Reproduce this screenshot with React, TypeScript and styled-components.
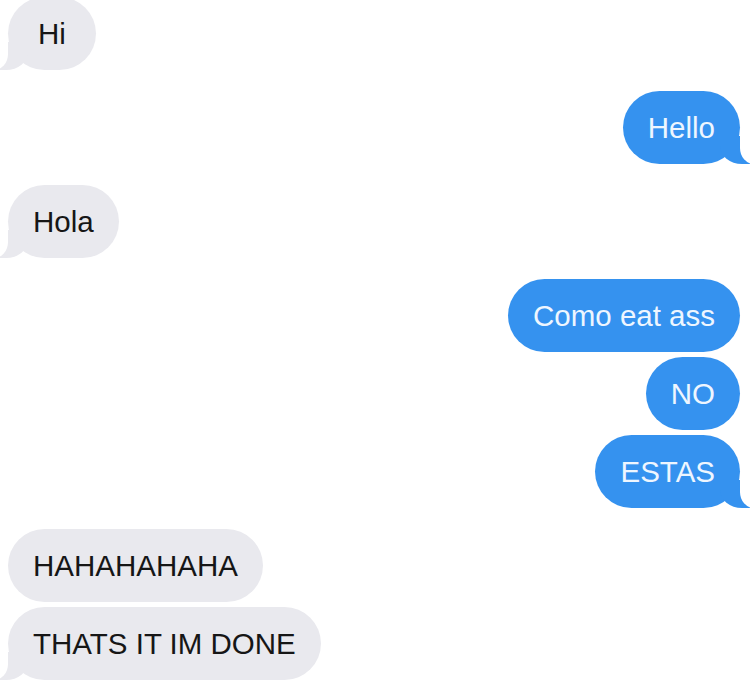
import styled, { createGlobalStyle, css } from "styled-components";

type Side = "in" | "out";

type Group = {
  side: Side;
  items: string[];
};

const groups: Group[] = [
  { side: "in", items: ["Hi"] },
  { side: "out", items: ["Hello"] },
  { side: "in", items: ["Hola"] },
  { side: "out", items: ["Como eat ass", "NO", "ESTAS"] },
  { side: "in", items: ["HAHAHAHAHA", "THATS IT IM DONE"] },
];

const BLUE = "#3592ef";
const GRAY = "#e9e9ee";

export default function App() {
  return (
    <>
      <GlobalStyle />
      <Screen>
        <Thread>
          {groups.map((group, gi) => (
            <MessageGroup key={gi} $side={group.side}>
              {group.items.map((text, i) => (
                <Bubble
                  key={text}
                  $side={group.side}
                  $tail={i === group.items.length - 1}
                >
                  {text}
                </Bubble>
              ))}
            </MessageGroup>
          ))}
        </Thread>
      </Screen>
    </>
  );
}

/* ===== styled-components ===== */

const GlobalStyle = createGlobalStyle`
  html, body {
    margin: 0;
    padding: 0;
    background: #ffffff;
    overflow: hidden;
  }
`;

const Screen = styled.div`
  width: 750px;
  height: 688px;
  overflow: hidden;
  background: #ffffff;
  font-family: "Liberation Sans", Arial, sans-serif;
`;

const Thread = styled.div`
  margin-top: -3px;
  padding: 0 10px 0 8px;
  display: flex;
  flex-direction: column;
  gap: 21px;
`;

const MessageGroup = styled.div<{ $side: Side }>`
  display: flex;
  flex-direction: column;
  gap: 5px;
  align-items: ${(p) => (p.$side === "out" ? "flex-end" : "flex-start")};
`;

const outTail = css`
  &::before {
    content: "";
    position: absolute;
    bottom: 0;
    right: -10px;
    width: 30px;
    height: 28px;
    background: ${BLUE};
    border-bottom-left-radius: 22px 18px;
  }

  &::after {
    content: "";
    position: absolute;
    bottom: 0;
    right: -16px;
    width: 16px;
    height: 28px;
    background: #ffffff;
    border-bottom-left-radius: 14px 16px;
  }
`;

const inTail = css`
  &::before {
    content: "";
    position: absolute;
    bottom: 0;
    left: -10px;
    width: 30px;
    height: 28px;
    background: ${GRAY};
    border-bottom-right-radius: 22px 18px;
  }

  &::after {
    content: "";
    position: absolute;
    bottom: 0;
    left: -16px;
    width: 16px;
    height: 28px;
    background: #ffffff;
    border-bottom-right-radius: 14px 16px;
  }
`;

const Bubble = styled.div<{ $side: Side; $tail: boolean }>`
  position: relative;
  box-sizing: border-box;
  height: 73px;
  min-width: 88px;
  padding: 0 25px;
  border-radius: 37px;
  font-size: 29.5px;
  line-height: 73px;
  text-align: center;
  white-space: nowrap;
  background: ${(p) => (p.$side === "out" ? BLUE : GRAY)};
  color: ${(p) => (p.$side === "out" ? "#eef6ff" : "#161616")};

  ${(p) => p.$tail && (p.$side === "out" ? outTail : inTail)}
`;
